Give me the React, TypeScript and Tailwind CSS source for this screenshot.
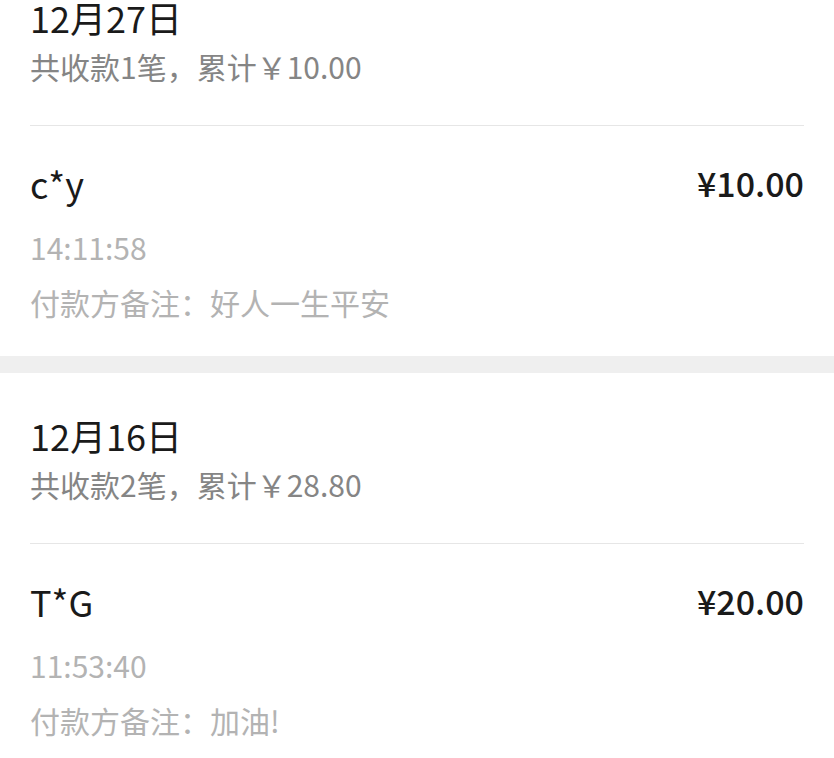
import React from "react";

type Item = { name: string; amount: string; time: string; remark: string };
type Day = { date: string; summary: string; items: Item[] };

const days: Day[] = [
  {
    date: "12月27日",
    summary: "共收款1笔，累计￥10.00",
    items: [{ name: "c*y", amount: "¥10.00", time: "14:11:58", remark: "付款方备注：好人一生平安" }],
  },
  {
    date: "12月16日",
    summary: "共收款2笔，累计￥28.80",
    items: [{ name: "T*G", amount: "¥20.00", time: "11:53:40", remark: "付款方备注：加油!" }],
  },
];

function DaySection({ day, first }: { day: Day; first: boolean }) {
  return (
    <section className={first ? "-mt-[7px]" : ""}>
      {!first && <div className="h-[17px] bg-[#efefef]" />}
      <div className={`px-[30px] ${first ? "" : "pt-[38px]"}`}>
        <div className="border-b border-[#e6e6e6] pb-[34px]">
          <div className="text-[36px] leading-[48px] text-[#1a1a1a]">{day.date}</div>
          <div className="text-[30px] leading-[50px] text-[#858585]">{day.summary}</div>
        </div>
      </div>
      {day.items.map((it) => (
        <div key={it.name} className="px-[30px] pt-[33px] pb-[29px]">
          <div className="flex items-start justify-between">
            <span className="text-[36px] leading-[48px] text-[#1a1a1a]">{it.name}</span>
            <span className="text-[34px] leading-[48px] font-medium text-[#1a1a1a]">{it.amount}</span>
          </div>
          <div className="mt-[15px] text-[30px] leading-[50px] text-[#b3b3b3]">{it.time}</div>
          <div className="mt-[5px] text-[30px] leading-[50px] text-[#b3b3b3]">{it.remark}</div>
        </div>
      ))}
    </section>
  );
}

export default function App() {
  return (
    <div
      className="h-[758px] w-[834px] overflow-hidden bg-white"
      style={{ fontFamily: '"Noto Sans CJK SC", "Noto Sans", sans-serif' }}
    >
      {days.map((d, i) => (
        <DaySection key={d.date} day={d} first={i === 0} />
      ))}
    </div>
  );
}
